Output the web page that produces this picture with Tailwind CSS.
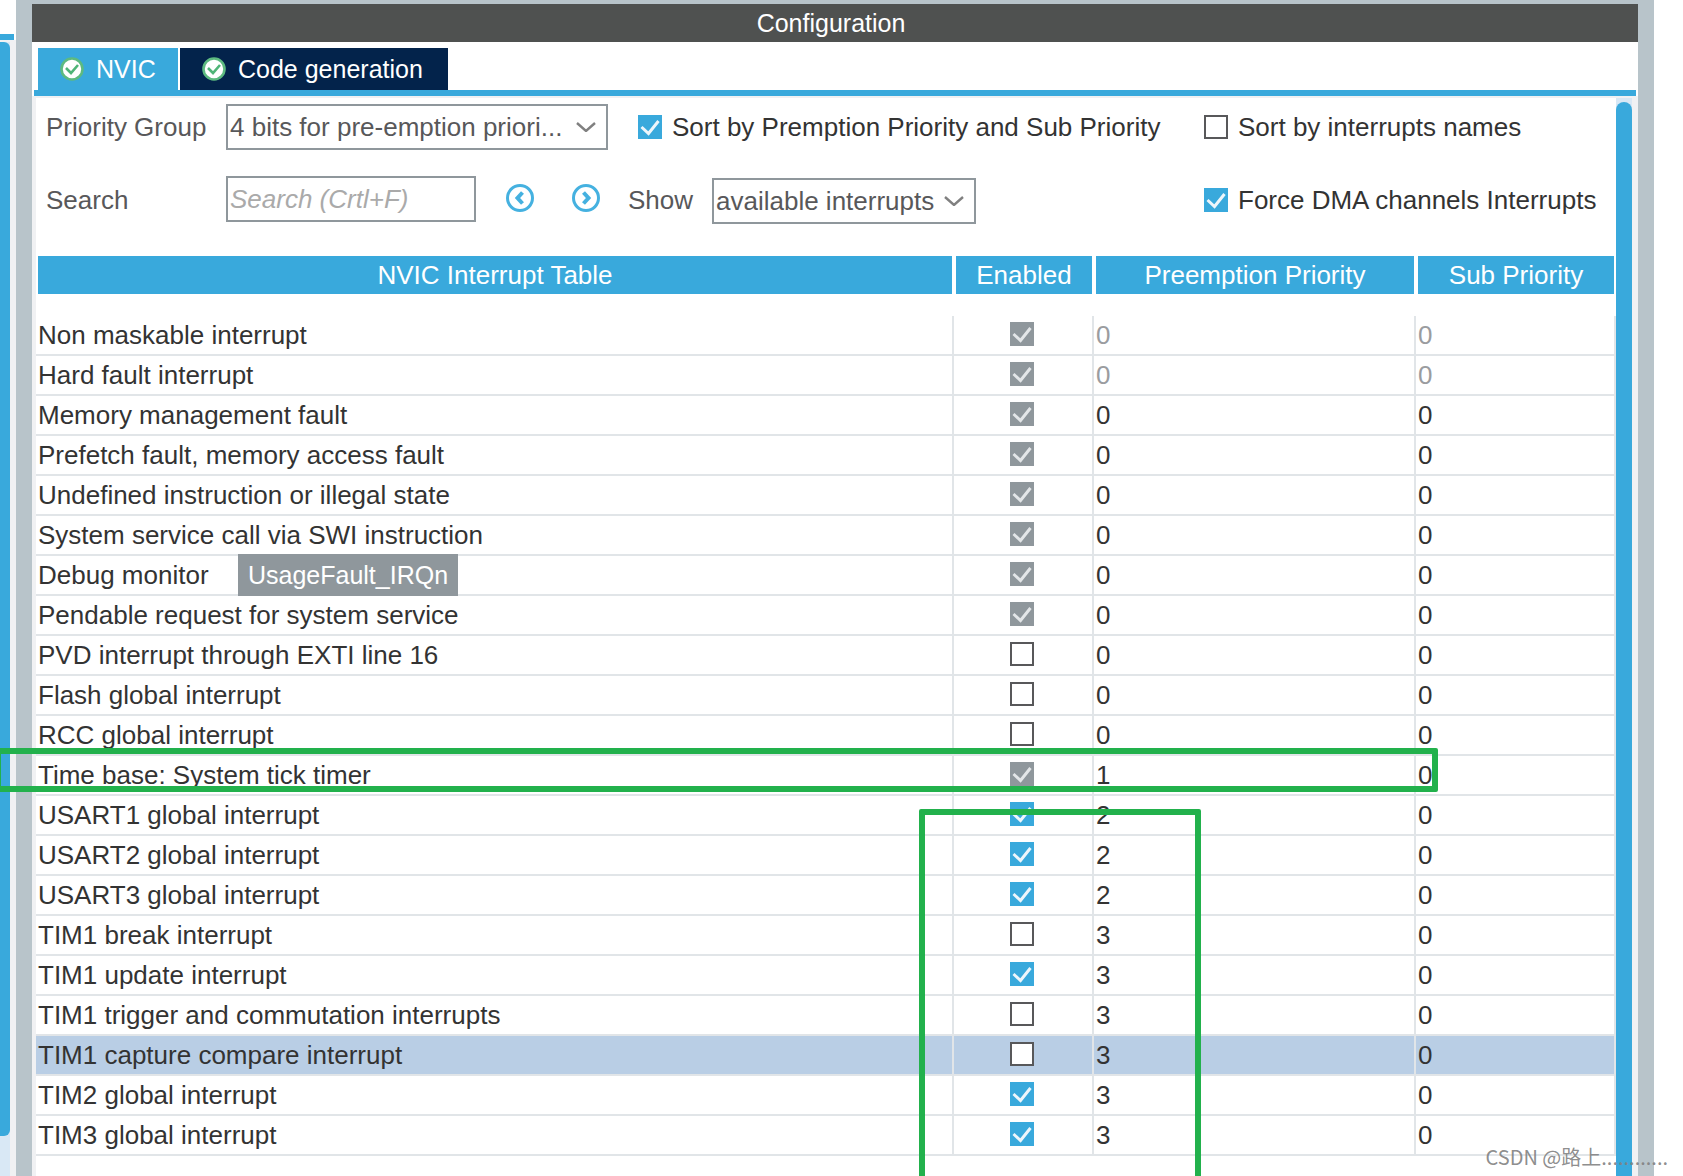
<!DOCTYPE html>
<html lang="en">
<head>
<meta charset="utf-8">
<meta name="viewport" content="width=device-width, initial-scale=1">
<title>Configuration</title>
<script src="https://cdn.jsdelivr.net/npm/@tailwindcss/browser@4"></script>
</head>
<body class="bg-white">
<div class="relative flex h-screen overflow-hidden bg-white font-['Liberation_Sans',Arial,sans-serif] text-[26px] leading-[38px] text-[#333333]">

  <!-- Edge of the neighbouring panel with its scroll bar -->
  <aside class="flex w-4 shrink-0 flex-col">
    <div class="h-[34px]"></div>
    <div class="mr-[2px] h-[6px] bg-[#39a9dc]"></div>
    <div class="flex-1 bg-[#f0f1f3] pt-[2px]">
      <div class="h-full w-[10px] bg-[#d9e8f5] pb-10">
        <div class="h-full rounded-r-[6px] bg-[#39a9dc]"></div>
      </div>
    </div>
  </aside>

  <main class="flex min-w-0 flex-1 flex-col border-x-16 border-t-4 border-[#b8c4ca] bg-white">
    <h1 class="h-[38px] shrink-0 bg-[#4f5150] pr-2 text-center text-[25px] text-white">Configuration</h1>

    <div role="tablist" class="mr-[2px] ml-[2px] flex shrink-0 gap-[2px] border-b-6 border-[#39a9dc] pt-[6px] pl-1 text-[25px] leading-[42px] text-white">
      <button role="tab" aria-selected="true" class="flex h-[42px] w-[140px] items-center gap-3 bg-[#39a9dc] pl-[22px]">
        <svg class="size-6" viewBox="0 0 24 24" fill="none"><circle cx="12" cy="12" r="10.500" fill="#fff" stroke="#5dba80" stroke-width="2.600"/><path d="M6 11l5 5 7-8" stroke="#4fb477" stroke-width="2.600"/></svg>
        NVIC
      </button>
      <button role="tab" aria-selected="false" class="flex h-[42px] w-[268px] items-center gap-3 bg-[#03234b] pl-[22px]">
        <svg class="size-6" viewBox="0 0 24 24" fill="none"><circle cx="12" cy="12" r="10.500" fill="#fff" stroke="#5dba80" stroke-width="2.600"/><path d="M6 11l5 5 7-8" stroke="#4fb477" stroke-width="2.600"/></svg>
        Code generation
      </button>
    </div>

    <div class="flex min-h-0 flex-1 border-x-4 border-t-2 border-r-6 border-[#f0f1f3]">
      <section class="min-w-0 flex-1 overflow-hidden">
        <form class="grid grid-cols-[180px_minmax(0,978px)_1fr] items-center gap-y-[26px] pt-[6px] pl-[10px] whitespace-nowrap">
          <label for="group" class="text-[#58585a]">Priority Group</label>
          <div class="flex h-[46px] items-center">
            <div class="relative h-[46px] w-[382px] shrink-0 text-[#58585a]">
              <select id="group" class="h-full w-full appearance-none border-2 border-[#8f979c] bg-white pl-[2px]"><option>4 bits for pre-emption priori...</option></select>
              <svg class="pointer-events-none absolute top-[18px] right-3 h-[10px] w-5" viewBox="0 0 20 10" fill="none" stroke="#808080" stroke-width="2.400"><path d="M1 1l9 8 9-8"/></svg>
            </div>
            <label class="ml-[30px] flex items-center gap-[10px]">
              <span class="grid size-6 shrink-0"><input type="checkbox" checked class="peer col-start-1 row-start-1 size-6 appearance-none border-2 border-[#58585a] bg-white checked:border-[#39a9dc] checked:bg-[#39a9dc]"><svg class="pointer-events-none invisible col-start-1 row-start-1 size-6 peer-checked:visible" viewBox="0 0 24 24" fill="none" stroke="#eef6fb" stroke-width="3"><path d="M3.500 12l7 6.500L20.500 6"/></svg></span>
              Sort by Premption Priority and Sub Priority
            </label>
          </div>
          <label class="flex items-center gap-[10px]">
            <input type="checkbox" class="size-6 shrink-0 appearance-none border-2 border-[#58585a] bg-white">
            Sort by interrupts names
          </label>

          <label for="search" class="text-[#58585a]">Search</label>
          <div class="flex h-12 items-center">
            <input id="search" type="text" placeholder="Search (Crtl+F)" class="h-[46px] w-[250px] shrink-0 self-start border-2 border-[#8f979c] bg-white pl-[2px] italic placeholder:text-[#aaaaaa]">
            <button type="button" aria-label="Previous" class="ml-[30px] shrink-0 pb-1"><svg class="size-7" viewBox="0 0 28 28" fill="none" stroke="#45b1e0" stroke-width="3"><circle cx="14" cy="14" r="12.500"/><path d="M16.500 8.500 11.500 14l5 5.500" stroke-width="4"/></svg></button>
            <button type="button" aria-label="Next" class="ml-[38px] shrink-0 pb-1"><svg class="size-7" viewBox="0 0 28 28" fill="none" stroke="#45b1e0" stroke-width="3"><circle cx="14" cy="14" r="12.500"/><path d="M11.500 8.500l5 5.500-5 5.500" stroke-width="4"/></svg></button>
            <label for="show" class="ml-7 w-[84px] shrink-0 text-[#58585a]">Show</label>
            <div class="relative h-[46px] w-[264px] shrink-0 self-end text-[#58585a]">
              <select id="show" class="h-full w-full appearance-none border-2 border-[#8f979c] bg-white pl-[2px]"><option>available interrupts</option></select>
              <svg class="pointer-events-none absolute top-[18px] right-3 h-[10px] w-5" viewBox="0 0 20 10" fill="none" stroke="#808080" stroke-width="2.400"><path d="M1 1l9 8 9-8"/></svg>
            </div>
          </div>
          <label class="flex items-center gap-[10px]">
            <span class="grid size-6 shrink-0"><input type="checkbox" checked class="peer col-start-1 row-start-1 size-6 appearance-none border-2 border-[#58585a] bg-white checked:border-[#39a9dc] checked:bg-[#39a9dc]"><svg class="pointer-events-none invisible col-start-1 row-start-1 size-6 peer-checked:visible" viewBox="0 0 24 24" fill="none" stroke="#eef6fb" stroke-width="3"><path d="M3.500 12l7 6.500L20.500 6"/></svg></span>
            Force DMA channels Interrupts
          </label>
        </form>

        <table class="mt-8 w-full table-fixed border-separate border-spacing-0">
          <colgroup><col><col class="w-[140px]"><col class="w-[322px]"><col class="w-[200px]"></colgroup>
          <thead>
            <tr class="text-white">
              <th class="border-x-2 border-b-22 border-white bg-[#39a9dc] p-0 font-normal">NVIC Interrupt Table</th>
              <th class="border-x-2 border-b-22 border-white bg-[#39a9dc] p-0 font-normal">Enabled</th>
              <th class="border-x-2 border-b-22 border-white bg-[#39a9dc] p-0 font-normal">Preemption Priority</th>
              <th class="border-x-2 border-b-22 border-white bg-[#39a9dc] p-0 font-normal">Sub Priority</th>
            </tr>
          </thead>
          <tbody id="rows"></tbody>
        </table>
      </section>

      <div class="w-4 shrink-0 bg-[#d9e8f5] pt-1">
        <div class="h-full rounded-t-[8px] bg-[#39a9dc]"></div>
      </div>
    </div>
  </main>
  <div class="w-[29px] shrink-0 bg-white"></div>

  <!-- Tooltip and highlight frames over the table -->
  <div role="tooltip" class="absolute top-[554px] left-[238px] h-[42px] w-[220px] bg-[#8f979c] text-center text-[25px] leading-[42px] text-white">UsageFault_IRQn</div>
  <div class="pointer-events-none absolute top-[748px] right-[245px] -left-[5px] h-11 rounded-[2px] border-6 border-[#22b14c]"></div>
  <div class="pointer-events-none absolute top-[809px] right-[482px] -bottom-2 w-[282px] rounded-[2px] border-6 border-[#22b14c]"></div>
  <div class="absolute right-[15px] bottom-1 font-['Noto_Sans_CJK_SC',sans-serif] text-[20px] leading-[30px] text-[#808080]/90">CSDN @路上............</div>
</div>

<script>
  // name, enabled, locked, preemption priority, greyed values, selected
  const interrupts = [
    ["Non maskable interrupt", 1, 1, 0, 1],
    ["Hard fault interrupt", 1, 1, 0, 1],
    ["Memory management fault", 1, 1, 0],
    ["Prefetch fault, memory access fault", 1, 1, 0],
    ["Undefined instruction or illegal state", 1, 1, 0],
    ["System service call via SWI instruction", 1, 1, 0],
    ["Debug monitor", 1, 1, 0],
    ["Pendable request for system service", 1, 1, 0],
    ["PVD interrupt through EXTI line 16", 0, 0, 0],
    ["Flash global interrupt", 0, 0, 0],
    ["RCC global interrupt", 0, 0, 0],
    ["Time base: System tick timer", 1, 1, 1],
    ["USART1 global interrupt", 1, 0, 2],
    ["USART2 global interrupt", 1, 0, 2],
    ["USART3 global interrupt", 1, 0, 2],
    ["TIM1 break interrupt", 0, 0, 3],
    ["TIM1 update interrupt", 1, 0, 3],
    ["TIM1 trigger and commutation interrupts", 0, 0, 3],
    ["TIM1 capture compare interrupt", 0, 0, 3, 0, 1],
    ["TIM2 global interrupt", 1, 0, 3],
    ["TIM3 global interrupt", 1, 0, 3]
  ];
  document.getElementById("rows").innerHTML = interrupts.map(([name, on, locked, priority, grey, selected], i) => `
    <tr class="${selected ? "bg-[#b9cee5]" : "bg-white"}">
      <td class="h-10 truncate border-r-2 border-b-2 border-[#e1e5e8] py-0 pr-0 pl-[2px]"><label for="irq${i}">${name}</label></td>
      <td class="h-10 border-r-2 border-b-2 border-[#e1e5e8] pt-0 pr-[2px] pb-[2px] pl-0">
        <div class="mx-auto grid size-6"><input id="irq${i}" type="checkbox" ${on ? "checked" : ""} ${locked ? "disabled" : ""} class="peer col-start-1 row-start-1 size-6 appearance-none border-2 border-[#58585a] bg-white checked:border-[#39a9dc] checked:bg-[#39a9dc] disabled:border-[#8f979c] disabled:bg-[#8f979c]"><svg class="pointer-events-none invisible col-start-1 row-start-1 size-6 peer-checked:visible" viewBox="0 0 24 24" fill="none" stroke="${locked ? "#e3e6e8" : "#eef6fb"}" stroke-width="3"><path d="M3.500 12l7 6.500L20.500 6"/></svg></div>
      </td>
      <td class="h-10 border-r-2 border-b-2 border-[#e1e5e8] py-0 pr-0 pl-[2px] ${grey ? "text-[#9a9ca0]" : ""}">${priority}</td>
      <td class="h-10 border-r-2 border-b-2 border-[#e1e5e8] py-0 pr-0 pl-[2px] ${grey ? "text-[#9a9ca0]" : ""}">0</td>
    </tr>`).join("");
</script>
</body>
</html>
